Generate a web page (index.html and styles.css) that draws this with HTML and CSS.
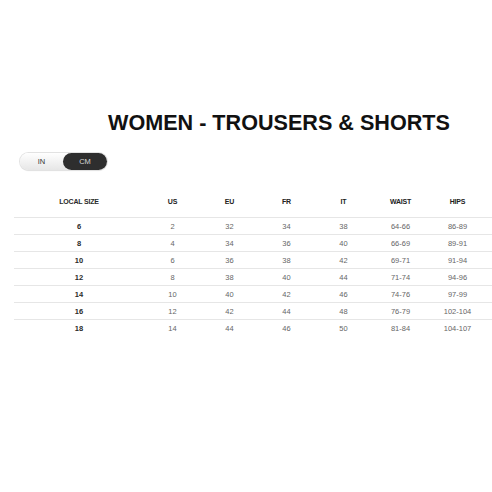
FILE: index.html
```html
<!DOCTYPE html>
<html>
<head>
<meta charset="utf-8">
<link rel="stylesheet" href="styles.css">
</head>
<body>
<div class="page">
  <h1 class="title">WOMEN - TROUSERS &amp; SHORTS</h1>
  <div class="toggle">
    <span class="opt opt-in">IN</span>
    <span class="opt opt-cm">CM</span>
  </div>
  <div class="table">
    <div class="row head">
      <div class="cell first">LOCAL SIZE</div><div class="cell">US</div><div class="cell">EU</div><div class="cell">FR</div><div class="cell">IT</div><div class="cell">WAIST</div><div class="cell">HIPS</div><div></div>
    </div>
    <div class="row"><div class="cell first">6</div><div class="cell">2</div><div class="cell">32</div><div class="cell">34</div><div class="cell">38</div><div class="cell">64-66</div><div class="cell">86-89</div><div></div></div>
    <div class="row"><div class="cell first">8</div><div class="cell">4</div><div class="cell">34</div><div class="cell">36</div><div class="cell">40</div><div class="cell">66-69</div><div class="cell">89-91</div><div></div></div>
    <div class="row"><div class="cell first">10</div><div class="cell">6</div><div class="cell">36</div><div class="cell">38</div><div class="cell">42</div><div class="cell">69-71</div><div class="cell">91-94</div><div></div></div>
    <div class="row"><div class="cell first">12</div><div class="cell">8</div><div class="cell">38</div><div class="cell">40</div><div class="cell">44</div><div class="cell">71-74</div><div class="cell">94-96</div><div></div></div>
    <div class="row"><div class="cell first">14</div><div class="cell">10</div><div class="cell">40</div><div class="cell">42</div><div class="cell">46</div><div class="cell">74-76</div><div class="cell">97-99</div><div></div></div>
    <div class="row"><div class="cell first">16</div><div class="cell">12</div><div class="cell">42</div><div class="cell">44</div><div class="cell">48</div><div class="cell">76-79</div><div class="cell">102-104</div><div></div></div>
    <div class="row"><div class="cell first">18</div><div class="cell">14</div><div class="cell">44</div><div class="cell">46</div><div class="cell">50</div><div class="cell">81-84</div><div class="cell">104-107</div><div></div></div>
  </div>
</div>
</body>
</html>
```

FILE: styles.css
```css
html, body {
  margin: 0;
  padding: 0;
  background: #ffffff;
}
.page {
  width: 492px;
  height: 492px;
  padding-top: 110px;
  box-sizing: border-box;
  font-family: "Liberation Sans", Arial, sans-serif;
}
.title {
  margin: 0 0 0 108px;
  font-size: 21.6px;
  line-height: 26px;
  font-weight: bold;
  color: #111;
  letter-spacing: 0;
  white-space: nowrap;
}
.toggle {
  margin: 17px 0 0 20px;
  width: 87px;
  height: 17px;
  border-radius: 9px;
  background: linear-gradient(#ffffff, #e6e6e6);
  box-shadow: 0 0 0 1px #e2e2e2, 0 1px 1px rgba(0,0,0,0.12);
  display: flex;
}
.opt {
  display: flex;
  align-items: center;
  justify-content: center;
  font-size: 7.5px;
  height: 17px;
}
.opt-in {
  width: 43px;
  color: #333;
}
.opt-cm {
  width: 44px;
  background: #2e2e2e;
  border-radius: 9px;
  color: #d8d8d8;
}
.table {
  margin: 15px 0 0 14px;
}
.row {
  display: grid;
  grid-template-columns: 130px repeat(6, 57px) 1fr;
  height: 16px;
  border-top: 1px solid #e6e6e6;
  align-items: center;
}
.row.head {
  border-top: none;
  height: 32px;
}
.cell {
  text-align: center;
  font-size: 7.5px;
  color: #666;
}
.head .cell {
  color: #222;
  font-weight: bold;
  font-size: 7px;
  letter-spacing: -0.2px;
}
.cell.first {
  color: #2a2a2a;
  font-weight: bold;
}
```
